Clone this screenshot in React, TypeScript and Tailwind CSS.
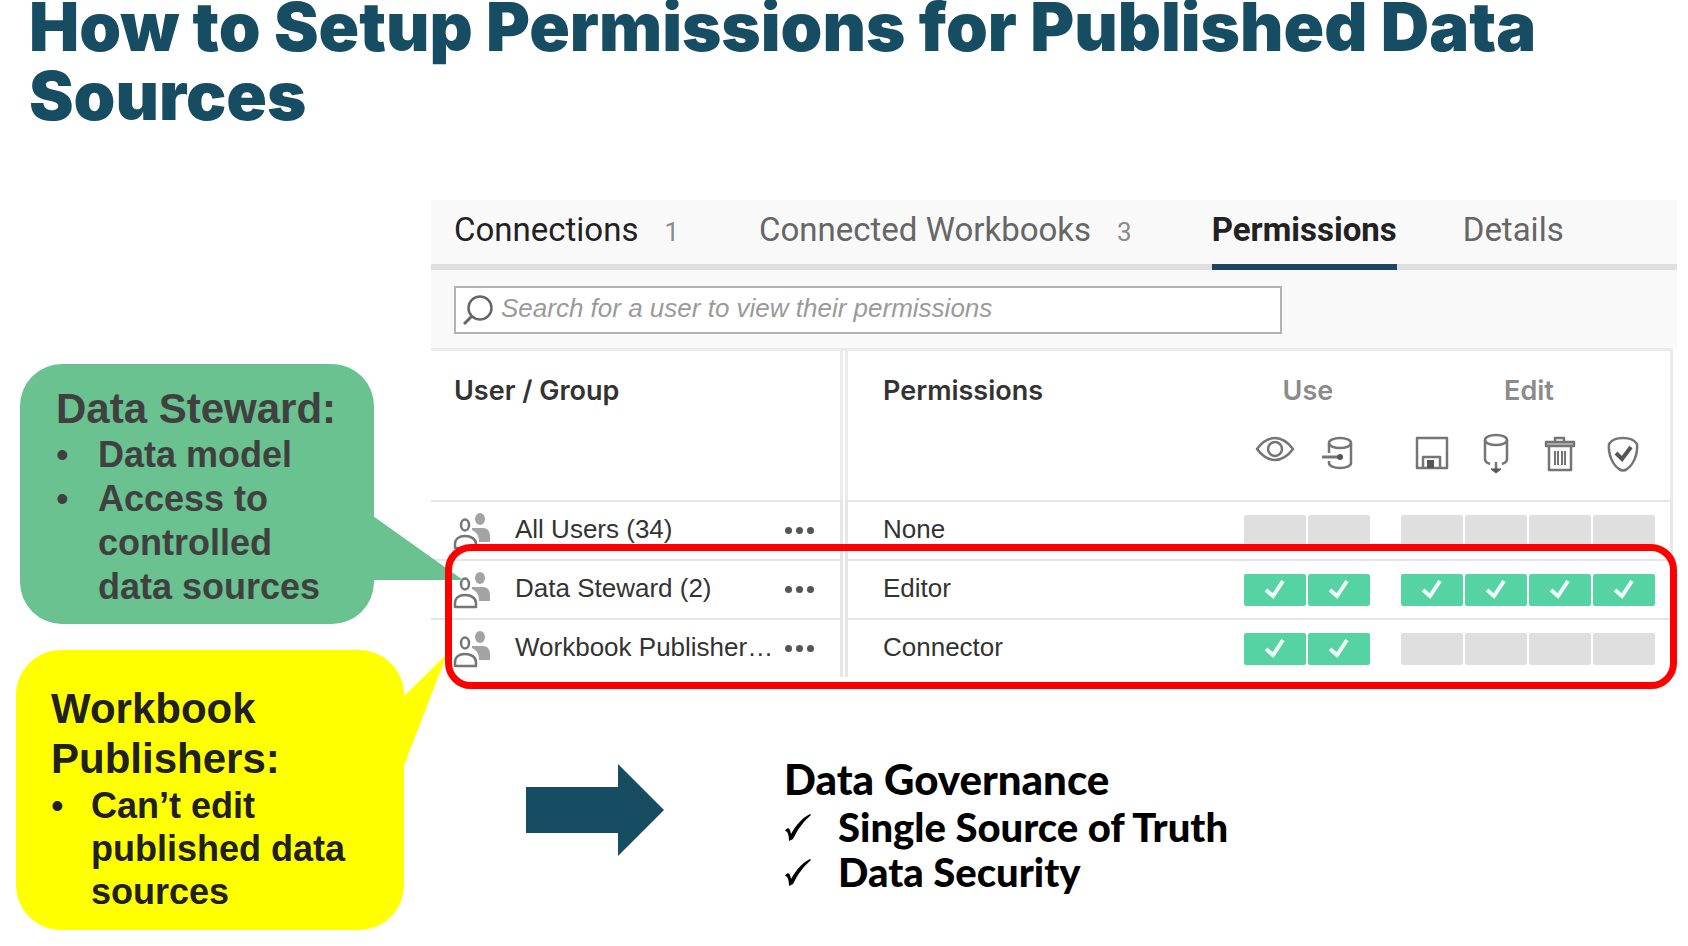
import React, { useState } from 'react';

type Tab = { name: string; count?: number };
type Row = { group: string; label: string; permission: string; use: boolean[]; edit: boolean[] };

const TABS: Tab[] = [
  { name: 'Connections', count: 1 },
  { name: 'Connected Workbooks', count: 3 },
  { name: 'Permissions' },
  { name: 'Details' },
];

const ROWS: Row[] = [
  { group: 'All Users (34)', label: 'All Users', permission: 'None', use: [false, false], edit: [false, false, false, false] },
  { group: 'Data Steward (2)', label: 'Data Steward', permission: 'Editor', use: [true, true], edit: [true, true, true, true] },
  { group: 'Workbook Publisher…', label: 'Workbook Publishers', permission: 'Connector', use: [true, true], edit: [false, false, false, false] },
];

const iconProps = {
  viewBox: '0 0 40 44',
  fill: 'none',
  stroke: '#757575',
  strokeWidth: 2.5,
  strokeLinejoin: 'round' as const,
  className: 'w-10 h-11',
};

const ViewIcon = () => (
  <svg {...iconProps} aria-label="View" role="img">
    <path d="M2 18 C8 10 14 7 20 7 C26 7 32 10 38 18 C32 26 26 29 20 29 C14 29 8 26 2 18 Z" />
    <circle cx="20" cy="18" r="7" />
  </svg>
);

const ConnectIcon = () => (
  <svg {...iconProps} aria-label="Connect" role="img">
    <ellipse cx="21" cy="12" rx="11" ry="5" />
    <path d="M10 12 V22 M32 12 V32 C32 35 27 37 21 37 C15 37 10 35 10 32 V30" />
    <path d="M3 26 H21" strokeWidth="3" />
    <circle cx="21" cy="26" r="3" fill="#555" stroke="none" />
  </svg>
);

const SaveIcon = () => (
  <svg {...iconProps} aria-label="Save" role="img">
    <rect x="5" y="7" width="30" height="30" />
    <path d="M11 37 V26 H28 V37" />
    <rect x="15" y="29" width="7" height="8" fill="#555" stroke="none" />
  </svg>
);

const DownloadIcon = () => (
  <svg {...iconProps} aria-label="Download" role="img">
    <ellipse cx="20" cy="9" rx="11" ry="5" />
    <path d="M9 9 V28 C9 31 11 32 14 33 M31 9 V28 C31 31 29 32 26 33" />
    <path d="M20 31 V39" />
    <path d="M15 38 H25 L20 42 Z" fill="#555" stroke="#555" strokeWidth="1" />
  </svg>
);

const DeleteIcon = () => (
  <svg {...iconProps} aria-label="Delete" role="img">
    <path d="M15 11 V7 H24 V11" />
    <path d="M6 11 H34 V15 H6 Z" fill="#bdbdbd" />
    <path d="M9 15 V39 H31 V15" />
    <path d="M15 20 V34 M18 20 V34 M22 20 V34 M25 20 V34" strokeWidth="2" />
  </svg>
);

const SetPermissionsIcon = () => (
  <svg {...iconProps} aria-label="Set permissions" role="img">
    <path d="M5 13 C8 8 14 7 19 7 C24 7 30 8 33 13 C34 24 29 34 23 38 C21 40 17 40 15 38 C9 34 4 24 5 13 Z" />
    <path d="M12 22 L18 28 L27 16" strokeWidth="4" stroke="#555" strokeLinejoin="miter" />
  </svg>
);

const GroupIcon = () => (
  <svg viewBox="0 0 38 38" className="w-[38px] h-[38px] shrink-0" aria-hidden="true">
    <ellipse cx="27" cy="7" rx="5" ry="6" fill="#a3a3a3" />
    <path d="M19 16 H30 C35 16 37 20 37 24 V30 H26 C26 25 25 21 19 18 Z" fill="#a3a3a3" />
    <ellipse cx="12" cy="13" rx="4" ry="5.5" fill="none" stroke="#757575" strokeWidth="2.5" />
    <path d="M2 36 V32 C2 27 6 24 12 24 C18 24 23 27 23 32 V36 Z" fill="#fff" stroke="#757575" strokeWidth="2.5" strokeLinejoin="round" />
  </svg>
);

const Capability: React.FC<{ allowed: boolean; label: string }> = ({ allowed, label }) => (
  <button
    aria-label={label}
    className={`flex w-[62px] h-8 items-center justify-center rounded-xs ${allowed ? 'bg-[#55d3a3]' : 'bg-[#dfdfdf]'}`}
  >
    {allowed && (
      <svg viewBox="0 0 22 22" className="w-[22px] h-[22px]" fill="none" stroke="#f2fcf8" strokeWidth="4" aria-hidden="true">
        <path d="M2 11 L9 17 L19 2" />
      </svg>
    )}
  </button>
);

const USE_ICONS = [ViewIcon, ConnectIcon];
const EDIT_ICONS = [SaveIcon, DownloadIcon, DeleteIcon, SetPermissionsIcon];

const PermissionsTable: React.FC = () => (
  <table className="w-full table-fixed border-separate border-spacing-0 text-left text-[26px] leading-8 text-[#333]">
    <colgroup>
      <col className="w-[412px]" />
      <col className="w-[2px]" />
      <col />
      <col className="w-16" />
      <col className="w-16" />
      <col className="w-[29px]" />
      <col className="w-16" />
      <col className="w-16" />
      <col className="w-16" />
      <col className="w-16" />
      <col className="w-4" />
    </colgroup>
    <thead className="align-top font-[Inter,sans-serif] text-[27px] [&_th]:border-[#ebebeb] [&_th]:pt-6 [&_th]:font-semibold">
      <tr>
        <th rowSpan={2} className="border-t-[3px] border-r-[3px] pl-[23px]">User / Group</th>
        <td rowSpan={2} className="border-t-[3px] border-[#ebebeb]" />
        <th rowSpan={2} className="border-t-[3px] border-l-[3px] pl-[35px]">Permissions</th>
        <th colSpan={2} className="h-[83px] border-t-[3px] text-center text-[#8b8b8b]">Use</th>
        <td className="border-t-[3px] border-[#ebebeb]" />
        <th colSpan={4} className="border-t-[3px] text-center text-[#8b8b8b]">Edit</th>
        <td rowSpan={2} className="border-t-[3px] border-r-[3px] border-[#ebebeb]" />
      </tr>
      <tr>
        {USE_ICONS.map((Icon, i) => (
          <td key={i} className="h-[69px] pl-[11px]"><Icon /></td>
        ))}
        <td />
        {EDIT_ICONS.map((Icon, i) => (
          <td key={i} className="h-[69px] pl-[11px]"><Icon /></td>
        ))}
      </tr>
    </thead>
    <tbody className="[&_td]:h-[59px] [&_td]:border-[#e6e6e6]">
      {ROWS.map((row) => (
        <tr key={row.group}>
          <td className="border-t-2 border-r-[3px] pl-[22px]">
            <div className="flex items-center">
              <GroupIcon />
              <span className="ml-6 flex-1 pb-1">{row.group}</span>
              <button aria-label={`Actions for ${row.label}`} className="mr-[26px] flex gap-1">
                <span className="h-[7px] w-[7px] rounded-full bg-[#555]" />
                <span className="h-[7px] w-[7px] rounded-full bg-[#555]" />
                <span className="h-[7px] w-[7px] rounded-full bg-[#555]" />
              </button>
            </div>
          </td>
          <td />
          <td className="border-t-2 border-l-[3px] pb-1 pl-[35px]">{row.permission}</td>
          {row.use.map((allowed, i) => (
            <td key={i} className="border-t-2">
              <Capability allowed={allowed} label={`${row.label} use ${i + 1}`} />
            </td>
          ))}
          <td className="border-t-2" />
          {row.edit.map((allowed, i) => (
            <td key={i} className="border-t-2">
              <Capability allowed={allowed} label={`${row.label} edit ${i + 1}`} />
            </td>
          ))}
          <td className="border-t-2 border-r-[3px]" />
        </tr>
      ))}
    </tbody>
  </table>
);

const PermissionsPanel: React.FC = () => {
  const [active, setActive] = useState('Permissions');

  const tabColor = (name: string) => {
    if (name === active) return 'border-[#1c4563] font-bold text-[#222]';
    return name === 'Connections' ? 'border-transparent text-[#222]' : 'border-transparent text-[#666]';
  };

  return (
    <section>
      <div className="bg-[#f9f9f9]">
        <nav className="flex gap-[66px] border-b-[6px] border-[#dfdfdf] pl-[23px] font-[Roboto,sans-serif] text-[33px] leading-10">
          {TABS.map(({ name, count }) => (
            <button
              key={name}
              onClick={() => setActive(name)}
              className={`-mb-[6px] flex items-baseline border-b-[6px] pt-[10px] pb-[14px] whitespace-nowrap ${tabColor(name)}`}
            >
              {name}
              {count !== undefined && <span className="mr-[14px] ml-[26px] text-[26px] leading-none text-[#8b8b8b]">{count}</span>}
            </button>
          ))}
        </nav>
        <div className="pt-4 pb-[14px] pl-[23px]">
          <label className="flex h-12 w-[828px] items-center border-2 border-[#b3b3b3] bg-white pl-[7px]">
            <svg viewBox="0 0 30 30" className="h-[30px] w-[30px]" fill="none" stroke="#666" strokeWidth="2.5" aria-hidden="true">
              <circle cx="17" cy="13" r="11.5" />
              <path d="M9 21 L1 29" strokeWidth="3" />
            </svg>
            <input
              type="text"
              aria-label="Search for a user"
              placeholder="Search for a user to view their permissions"
              className="ml-2 flex-1 pb-1 text-[26px] italic outline-none placeholder:text-[#9a9a9a]"
            />
          </label>
        </div>
      </div>
      <div className="relative pr-1">
        <PermissionsTable />
        <div className="pointer-events-none absolute top-[196px] right-0 -bottom-3 left-[14px] z-20 rounded-[26px] border-[7px] border-[#ff0000]" />
      </div>
    </section>
  );
};

const Callouts: React.FC = () => (
  <aside className="w-[431px] shrink-0 pt-[164px] font-bold">
    <div className="relative ml-5 w-[354px] rounded-[42px] bg-[#69c28f] pt-[21px] pr-6 pb-[15px] pl-9 text-[#404040]">
      <h2 className="text-[42px] leading-[48px] whitespace-nowrap">Data Steward:</h2>
      <ul className="list-none text-[36px] leading-[44px]">
        <li className="flex"><span className="w-[42px] shrink-0 font-normal">•</span>Data model</li>
        <li className="flex"><span className="w-[42px] shrink-0 font-normal">•</span>Access to controlled data sources</li>
      </ul>
      <svg viewBox="0 0 90 64" className="absolute top-[152px] left-[353px] z-10 h-16 w-[90px]" aria-hidden="true">
        <path d="M0 0 L90 64 H0 Z" fill="#69c28f" />
      </svg>
    </div>
    <div className="relative mt-[26px] ml-4 w-[388px] rounded-[45px] bg-[#ffff00] pt-[34px] pr-10 pb-[17px] pl-[35px] text-[#202020]">
      <h2 className="text-[42px] leading-[50px]">Workbook Publishers:</h2>
      <ul className="list-none text-[36px] leading-[43px]">
        <li className="flex"><span className="w-10 shrink-0 font-normal">•</span>Can’t edit published data sources</li>
      </ul>
      <svg viewBox="0 0 44 116" className="absolute top-1 left-[387px] z-10 h-[116px] w-11" aria-hidden="true">
        <path d="M0 43 L44 0 L0 114 Z" fill="#ffff00" />
      </svg>
    </div>
  </aside>
);

const CheckBullet = () => (
  <svg viewBox="0 0 28 28" className="mr-[26px] h-7 w-7" aria-hidden="true">
    <path d="M1 17 C3 13 6 13 7 20 C12 11 18 4 26 0 L27 1 C19 8 14 15 9 25 L5 27 C5 22 4 17 1 17 Z" />
  </svg>
);

const Governance: React.FC = () => (
  <section className="mt-[76px] flex pl-[95px] text-black">
    <svg viewBox="0 0 138 92" className="mt-[11px] h-[92px] w-[138px]" aria-hidden="true">
      <path d="M0 23 H92 V0 L138 46 L92 92 V69 H0 Z" fill="#164d63" />
    </svg>
    <div className="ml-[120px] font-[Lato,sans-serif] font-black">
      <h2 className="text-[42px] leading-[52px]">Data Governance</h2>
      <ul className="text-[40px] leading-[45px]">
        <li className="flex items-center"><CheckBullet />Single Source of Truth</li>
        <li className="flex items-center"><CheckBullet />Data Security</li>
      </ul>
    </div>
  </section>
);

const App: React.FC = () => (
  <div className="bg-white font-['Liberation_Sans',Arial,sans-serif]">
    <h1 className="-mt-2 px-[29px] font-[Inter,sans-serif] text-[67px] leading-[69px] font-black text-[#164d63]">
      How to Setup Permissions for Published Data Sources
    </h1>
    <main className="mt-[70px] flex pr-[11px]">
      <Callouts />
      <div className="min-w-0 flex-1">
        <PermissionsPanel />
        <Governance />
      </div>
    </main>
  </div>
);

export default App;
